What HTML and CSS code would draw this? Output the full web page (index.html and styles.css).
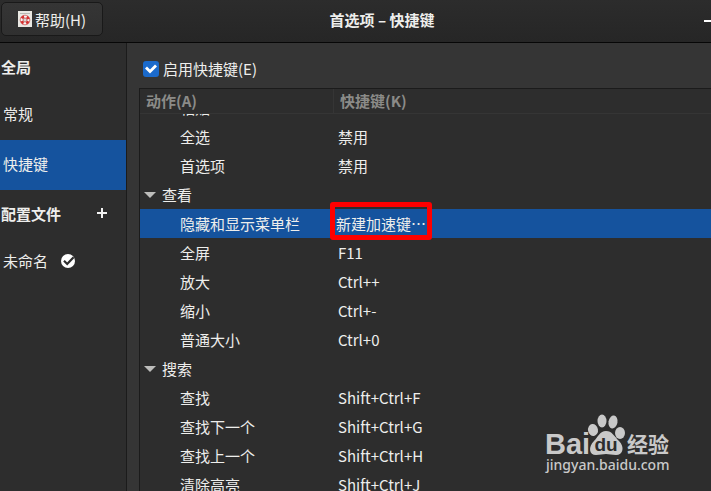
FILE: index.html
```html
<!DOCTYPE html>
<html lang="zh-CN">
<head>
<meta charset="utf-8">
<title>首选项 – 快捷键</title>
<link rel="stylesheet" href="styles.css">
</head>
<body>
<header class="titlebar">
  <button class="help" type="button">
    <svg class="help-icon" viewBox="0 0 14 16" aria-hidden="true">
      <rect width="14" height="16" fill="#e9e8e3"/>
      <rect x="2" y="2" width="10" height="1" fill="#b9b9b4"/>
      <circle cx="7" cy="9" r="3.6" fill="none" stroke="#f6f6f6" stroke-width="2.6"/>
      <circle cx="7" cy="9" r="3.6" fill="none" stroke="#d8302f" stroke-width="2.6" stroke-dasharray="2.8 2.85" stroke-dashoffset="-1.4"/>
      <circle cx="7" cy="9" r="4.8" fill="none" stroke="#c44" stroke-width=".7"/>
      <circle cx="7" cy="9" r="2" fill="#d9d9d6" stroke="#b33" stroke-width=".7"/>
    </svg>
    <span>帮助(H)</span>
  </button>
  <h1 class="title">首选项 – 快捷键</h1>
  <button class="minimize" type="button" aria-label="最小化"><span class="minimize-bar"></span></button>
</header>
<div class="content">
  <nav class="sidebar">
    <h2 class="side-heading">全局</h2>
    <a class="side-item" href="#general">常规</a>
    <a class="side-item current" href="#shortcuts">快捷键</a>
    <div class="side-heading">
      <h2 class="side-label">配置文件</h2>
      <button class="add" type="button" aria-label="新建配置文件">
        <svg viewBox="0 0 10 10" aria-hidden="true"><path d="M5 0V10M0 5H10" stroke="#f2f2f2" stroke-width="2"/></svg>
      </button>
    </div>
    <a class="side-item" href="#profile">未命名
      <svg class="default-mark" viewBox="0 0 14 14" aria-hidden="true"><circle cx="7" cy="7" r="7" fill="#fff"/><path d="M3 6.8L6.2 10L12.6 3.2" fill="none" stroke="#2d2d2d" stroke-width="2.2"/></svg>
    </a>
  </nav>
  <main class="main">
    <label class="enable"><input class="check" type="checkbox" checked><span>启用快捷键(E)</span></label>
    <div class="list">
      <table class="shortcuts">
        <thead><tr><th class="action" scope="col">动作(A)</th><th scope="col">快捷键(K)</th></tr></thead>
        <tbody>
          <tr><td><div class="scrolled"><span>粘贴</span></div></td><td></td></tr>
          <tr><td>全选</td><td>禁用</td></tr>
          <tr><td>首选项</td><td>禁用</td></tr>
          <tr><td class="group" colspan="2"><svg class="arrow" viewBox="0 0 12 6" aria-hidden="true"><path d="M0 0H12L6 6Z" fill="#bdbdbb"/></svg>查看</td></tr>
          <tr class="selected"><td>隐藏和显示菜单栏</td><td class="editing">新建加速键…<span class="marker"></span></td></tr>
          <tr><td>全屏</td><td>F11</td></tr>
          <tr><td>放大</td><td>Ctrl++</td></tr>
          <tr><td>缩小</td><td>Ctrl+-</td></tr>
          <tr><td>普通大小</td><td>Ctrl+0</td></tr>
          <tr><td class="group" colspan="2"><svg class="arrow" viewBox="0 0 12 6" aria-hidden="true"><path d="M0 0H12L6 6Z" fill="#bdbdbb"/></svg>搜索</td></tr>
          <tr><td>查找</td><td>Shift+Ctrl+F</td></tr>
          <tr><td>查找下一个</td><td>Shift+Ctrl+G</td></tr>
          <tr><td>查找上一个</td><td>Shift+Ctrl+H</td></tr>
          <tr><td>清除高亮</td><td>Shift+Ctrl+J</td></tr>
        </tbody>
      </table>
    </div>
  </main>
</div>
<svg class="watermark" viewBox="0 0 130 62" role="img" aria-label="Baidu 经验">
  <g fill="#c9c9c9">
    <ellipse cx="48" cy="16" rx="5" ry="6" transform="rotate(-10 48 16)"/>
    <ellipse cx="57" cy="7" rx="4.500" ry="6.500"/>
    <ellipse cx="68" cy="8" rx="4.500" ry="6.500" transform="rotate(10 68 8)"/>
    <ellipse cx="75" cy="19" rx="5" ry="6"/>
    <path d="M61 17C67 17 69 22 74 27C80 33 78 41 71 41C67 41 64 40 61 40C58 40 55 41 51 41C44 41 43 33 49 27C53 23 55 17 61 17Z"/>
    <text class="brand" x="0" y="40">Bai</text>
    <text class="brand-cn" x="82" y="38">经验</text>
    <text class="domain" x="1" y="56">jingyan.baidu.com</text>
  </g>
  <text class="brand-du" x="61" y="37" text-anchor="middle" fill="#2d2d2d">du</text>
</svg>
</body>
</html>
```
FILE: styles.css
```css
* { box-sizing: border-box; }

body {
  margin: 0;
  height: 100vh;
  display: flex;
  flex-direction: column;
  overflow: hidden;
  background: #353535;
  color: #eeeeec;
  font: 15px/29px "Noto Sans CJK SC", sans-serif;
}

button { font: inherit; color: inherit; padding: 0; border: 0; background: none; }
h1, h2 { margin: 0; font-size: 15px; font-weight: 700; }

.titlebar {
  flex: none;
  height: 43px;
  display: grid;
  grid-template-columns: 104px 1fr 104px;
  align-items: center;
  padding-bottom: 4px;
  background: linear-gradient(#2c2c2c, #262626);
  border-bottom: 1px solid #070707;
}
.help {
  height: 34px;
  margin: 0 1px;
  display: flex;
  align-items: center;
  justify-content: center;
  gap: 3px;
  border: 1px solid #191919;
  border-radius: 5px;
  background: linear-gradient(#353535, #303030);
}
.help-icon { width: 14px; height: 16px; }
.title { text-align: center; padding-left: 53px; }
.minimize {
  justify-self: end;
  display: flex;
  align-items: center;
  height: 29px;
  width: 7px;
  padding-top: 4px;
}
.minimize-bar { width: 7px; height: 2px; background: #fff; }

.content { flex: 1; min-height: 0; display: flex; }
.sidebar {
  flex: none;
  width: 127px;
  background: #2d2d2d;
  border-right: 1px solid #1b1b1b;
}
.side-heading, .side-item {
  display: flex;
  align-items: center;
  height: 47px;
  padding: 0 0 1px 1px;
}
.side-item {
  height: 50px;
  padding: 0 0 3px 3px;
  gap: 13px;
  color: inherit;
  text-decoration: none;
}
.current { background: #15539e; }
.side-label { flex: 1; }
.add { display: flex; width: 10px; margin-right: 19px; }
.add svg { width: 10px; height: 10px; }
.default-mark { width: 14px; height: 14px; }

.main {
  flex: 1;
  min-width: 0;
  padding: 11px 0 0 12px;
  display: flex;
  flex-direction: column;
}
.enable { display: flex; align-items: center; gap: 4px; height: 29px; margin: 0 4px 5px; }
.check {
  appearance: none;
  width: 16px;
  height: 16px;
  margin: 0;
  border-radius: 3px;
  background: #1b6acb;
}
.check::before {
  content: "";
  display: block;
  width: 16px;
  height: 16px;
  background: #fff;
  clip-path: polygon(2px 8px, 4px 6px, 7px 9px, 12px 4px, 14px 6px, 7px 13px);
}
.list {
  flex: 1;
  min-height: 0;
  overflow: hidden;
  background: #2d2d2d;
  border-top: 1px solid #1b1b1b;
  border-left: 1px solid #1b1b1b;
}
.shortcuts { width: 100%; table-layout: fixed; border-collapse: separate; border-spacing: 0; }
th {
  height: 25px;
  padding: 0 6px;
  line-height: 24px;
  text-align: left;
  color: #8b8b88;
  border-bottom: 1px solid #353535;
}
.action { width: 194px; border-right: 1px solid #353535; }
td { padding: 0 0 0 4px; white-space: nowrap; }
td:first-child { padding-left: 40px; }
td.group { padding-left: 4px; }
.arrow { width: 12px; height: 6px; margin-right: 6px; vertical-align: 3px; }
.scrolled { height: 8px; display: flex; align-items: flex-end; overflow: hidden; }
.selected { background: #15539e; }
td.editing { position: relative; padding-left: 2px; }
.marker {
  position: absolute;
  left: -4px;
  top: -7px;
  width: 102px;
  height: 38px;
  border: 5px solid #fe0000;
  border-radius: 3px;
}

.watermark { position: absolute; right: 36px; bottom: 15px; width: 130px; height: 62px; overflow: visible; }
.brand { font: 700 29px "Liberation Sans", sans-serif; }
.brand-du { font: 700 19px "Liberation Sans", sans-serif; }
.brand-cn { font: 700 21px "Noto Sans CJK SC", sans-serif; }
.domain { font: 500 14px "Noto Sans", sans-serif; }
```
